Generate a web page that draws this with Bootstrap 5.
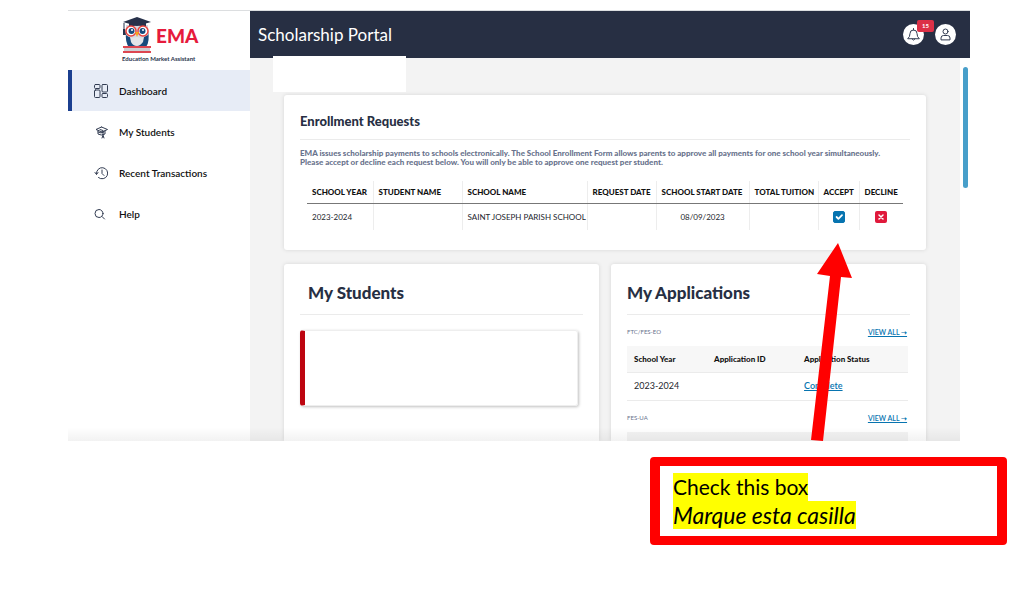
<!DOCTYPE html>
<html lang="en">
<head>
<meta charset="utf-8">
<meta name="viewport" content="width=device-width, initial-scale=1">
<title>Scholarship Portal</title>
<link href="https://cdn.jsdelivr.net/npm/bootstrap@5.3.0/dist/css/bootstrap.min.css" rel="stylesheet">
<style>
  body { font-family: Lato, "Open Sans", sans-serif; color: #111; background: #fff; font-size: 8px; line-height: 10px; }
  .portal { margin: 10px 48px 0 68px; border-top: 1px solid #dcdee0; overflow: hidden; }
  .side { width: 182px; flex: none; background: #fff; }
  .brand { height: 59px; padding: 6px 0 0 54px; }
  .brand-owl { width: 30px; height: 37px; }
  .brand-name { font: 900 19px/32px Lato, sans-serif; color: #e61b3c; }
  .brand-tag { font: 700 6px/9px Lato, sans-serif; color: #27314a; }
  .side .nav-link { height: 41px; padding: 0 0 0 22px; border-left: 4px solid transparent; color: #111; font-size: 10px; font-weight: 600; border-radius: 0; gap: 11px; }
  .side .nav-link.active { background: #e7ecf6; border-color: #1b3f8f; }
  .side .nav-link svg { width: 14px; height: 14px; color: #323c52; }
  .line { fill: none; stroke: currentColor; stroke-linecap: round; stroke-linejoin: round; }
  .topbar { height: 47px; background: #272f43; color: #fff; padding: 0 14px 0 8px; gap: 11px; }
  .topbar h1 { font-size: 17px; line-height: 20px; font-weight: 400; }
  .round-btn { width: 21px; height: 21px; background: #fff; border: 0; border-radius: 50%; color: #323c52; }
  .round-btn svg { width: 15px; height: 15px; }
  .count { font-size: 6px; line-height: 6px; padding: 3px 5px; background: #dc3046; border-radius: 2px; left: 14px; top: -4px; }
  .content { background: #f3f3f3; padding: 0 34px; min-width: 0; }
  .blank { width: 133px; height: 36px; margin: -2px 0 3px -11px; background: #fff; }
  .gutter { width: 10px; flex: none; padding: 9px 2px 0 3px; }
  .thumb { height: 121px; background: #489fca; border-radius: 3px; }
  .panel { background: #fff; border-radius: 3px; box-shadow: 0 0 4px rgba(0,0,0,.12); padding: 0 16px; color: #272f43; }
  .panel h2 { font-size: 13px; line-height: 16px; font-weight: 900; padding: 18px 0 10px; margin: 0; border-bottom: 1px solid #ebebeb; }
  .panel h2.big { font-size: 17px; line-height: 20px; padding: 19px 0 11px; }
  .lower { gap: 12px; margin-top: 14px; }
  .lower .panel { border-radius: 3px 3px 0 0; }
  .intro { font-weight: 900; line-height: 9px; color: #68728c; margin: 9px 0 14px; }
  .panel table { margin: 0; color: #24272e; table-layout: fixed; }
  .requests { padding: 0 7px 20px; }
  .requests th, .requests td { padding: 0 5px; white-space: nowrap; border-right: 1px solid #ededed; border-bottom: 0; text-align: left; vertical-align: middle; box-shadow: none; }
  .requests th:last-child, .requests td:last-child { border-right: 0; }
  .requests th { height: 22px; font-weight: 900; border-bottom: 1px solid #777; color: #111; }
  .requests td { height: 27px; }
  .w-year { width: 66px; } .w-student { width: 89px; } .w-date { width: 69px; } .w-start { width: 93px; }
  .w-total { width: 69px; } .w-accept { width: 41px; } .w-decline { width: 44px; }
  .tick.form-check-input { width: 12px; height: 12px; margin: 0; border-radius: 2px; display: block; }
  .tick.form-check-input:checked { background-color: #0774b0; border-color: #0774b0; background-size: 12px; }
  .cross { width: 12px; height: 12px; border: 0; border-radius: 2px; background: #e0193b; color: #fff; }
  .cross svg { width: 8px; height: 8px; stroke-width: 1.5; }
  .student { height: 76px; margin: 15px 5px 0 0; border: 1px solid #eee; border-left: 5px solid #bd0510; border-radius: 3px; box-shadow: 1px 1px 3px rgba(0,0,0,.25); }
  .group-head { font-size: 6px; line-height: 10px; color: #68728c; padding: 12px 3px 9px 0; }
  .group-head a { font-size: 7px; font-weight: 600; color: #0774b0; }
  .apps { padding-right: 2px; }
  .apps th { background: #f7f7f7; height: 26px; font-weight: 900; color: #111; }
  .apps td { height: 28px; font-size: 9px; }
  .apps th, .apps td { padding: 0 7px; border-bottom: 1px solid #ebebeb; box-shadow: none; vertical-align: middle; text-align: left; }
  .apps td a { color: #0774b0; font-weight: 600; }
  .w-app { width: 80px; } .w-id { width: 90px; }
  .next-table { height: 9px; background: #f3f3f3; margin-right: 2px; }
  .fade-foot { left: 0; right: 10px; bottom: 0; height: 14px; background: linear-gradient(transparent, rgba(0,0,0,.05)); pointer-events: none; }
  .callout { width: 357px; margin: 16px 11px 0 auto; border: 9px solid #f00; border-left-width: 10px; border-right-width: 10px; border-radius: 4px; background: #fff; color: #000; padding: 7px 13px; line-height: 28px; }
  .callout p { margin: 0; font-size: 21px; }
  .callout p.es { font-size: 23px; }
  .callout mark { background: #ff0; padding: 0; display: inline-block; color: #000; }
  .pointer { width: 42px; height: 200px; right: 144px; bottom: 93px; pointer-events: none; }
</style>
</head>
<body>
<div class="portal d-flex position-relative">
  <aside class="side">
    <div class="brand">
      <div class="d-flex align-items-center gap-1">
        <svg class="brand-owl" viewBox="0 0 30 37" aria-hidden="true">
          <path d="M4 14Q3 26 7 30H24Q28 25 26 13L15 9Z" fill="#174a7c"/>
          <path d="M8 20Q15 15 22 20L21 25Q18 29 15 29Q11 29 9 25Z" fill="#e2e4e8"/>
          <path d="M4 8H26V18Q20 22 15 20Q8 22 4 18Z" fill="#d4d9e1"/>
          <path d="M7 6H24V10Q15 7 7 10Z" fill="#27314a"/>
          <path d="M15 0L29 5L15 9L1 5Z" fill="#27314a"/>
          <path d="M2 6V12" stroke="#27314a"/><path d="M1 12H3L4 18H1Z" fill="#27314a"/>
          <g fill="#fff" stroke="#e9433f" stroke-width="1.5"><circle cx="9" cy="14" r="5"/><circle cx="21" cy="14" r="5"/></g>
          <g fill="#174a7c"><circle cx="9.500" cy="14" r="3"/><circle cx="20.500" cy="14" r="3"/></g>
          <g fill="#fff"><circle cx="10" cy="13" r="1"/><circle cx="21" cy="13" r="1"/></g>
          <path d="M13 15H17L15 20Z" fill="#f4a51c"/>
          <path d="M1 29H29V31H1Z" fill="#dd4650"/><path d="M2 31H28V34H2Z" fill="#cdd0d4"/><path d="M1 34H29V36H1Z" fill="#dd4650"/>
        </svg>
        <span class="brand-name">EMA</span>
      </div>
      <div class="brand-tag">Education Market Assistant</div>
    </div>
    <nav class="nav flex-column flex-nowrap">
      <a class="nav-link active d-flex align-items-center" href="#"><svg class="line" viewBox="0 0 14 14"><rect x=".5" y=".5" width="5.500" height="4" rx="1"/><rect x=".5" y="6" width="5.500" height="7.500" rx="1"/><rect x="8" y=".5" width="5.500" height="7.500" rx="1"/><rect x="8" y="9.500" width="5.500" height="4" rx="1"/></svg>Dashboard</a>
      <a class="nav-link d-flex align-items-center" href="#"><svg class="line" viewBox="0 0 14 14"><path d="M7.500 2L13.500 4.500L8 7M7.500 2L2 4.500L8 7M4 6V9Q7 11 11 9V6M6 4.500L9 5.500V12M8 13L9 10.500L10 13M4 7Q7 9 10 7"/></svg>My Students</a>
      <a class="nav-link d-flex align-items-center" href="#"><svg class="line" viewBox="0 0 14 14"><path d="M2.500 8A5.600 5.600 0 1 1 4.500 11.600M1 6.500L2.500 8.500L4 6.500M8 4V7.500L10 9.500"/></svg>Recent Transactions</a>
      <a class="nav-link d-flex align-items-center" href="#"><svg class="line" viewBox="0 0 14 14"><circle cx="5" cy="6.500" r="4"/><path d="M8 9.500L10.500 12"/></svg>Help</a>
    </nav>
  </aside>
  <div class="flex-grow-1">
    <header class="topbar d-flex align-items-center">
      <h1 class="m-0 me-auto">Scholarship Portal</h1>
      <button class="round-btn position-relative p-0 d-flex align-items-center justify-content-center" type="button" aria-label="Notifications"><svg class="line" viewBox="0 0 15 15"><path d="M2 11.500Q4 10 4 6.500Q4 3 7.500 3Q11 3 11 6.500Q11 10 13 11.500ZM6 12Q7.500 14.500 9 12M7.500 1.500V3"/></svg><span class="badge count position-absolute">15</span></button>
      <button class="round-btn p-0 d-flex align-items-center justify-content-center" type="button" aria-label="Account"><svg class="line" viewBox="0 0 15 15"><circle cx="7.500" cy="4.500" r="2.500"/><path d="M3 12.500V11Q3 8.500 5.500 8.500H9.500Q12 8.500 12 11V12.500Z"/></svg></button>
    </header>
    <div class="d-flex">
      <main class="content flex-grow-1">
        <div class="blank position-relative"></div>
        <section class="panel">
          <h2>Enrollment Requests</h2>
          <p class="intro">EMA issues scholarship payments to schools electronically. The School Enrollment Form allows parents to approve all payments for one school year simultaneously.<br>Please accept or decline each request below. You will only be able to approve one request per student.</p>
          <div class="requests">
            <table class="table">
              <thead><tr><th class="w-year">SCHOOL YEAR</th><th class="w-student">STUDENT NAME</th><th>SCHOOL NAME</th><th class="w-date">REQUEST DATE</th><th class="w-start">SCHOOL START DATE</th><th class="w-total">TOTAL TUITION</th><th class="w-accept">ACCEPT</th><th class="w-decline">DECLINE</th></tr></thead>
              <tbody><tr><td>2023-2024</td><td></td><td>SAINT JOSEPH PARISH SCHOOL</td><td></td><td class="text-center">08/09/2023</td><td></td>
                <td><input class="form-check-input tick mx-auto" type="checkbox" checked aria-label="Accept"></td>
                <td><button class="cross p-0 d-flex align-items-center justify-content-center mx-auto" type="button" aria-label="Decline"><svg class="line" viewBox="0 0 8 8"><path d="M2 2L6 6M6 2L2 6"/></svg></button></td></tr></tbody>
            </table>
          </div>
        </section>
        <div class="d-flex lower">
          <section class="panel col">
            <h2 class="big ps-2">My Students</h2>
            <div class="student"></div>
          </section>
          <section class="panel col">
            <h2 class="big">My Applications</h2>
            <div class="group-head d-flex justify-content-between"><span>FTC/FES-EO</span><a href="#">VIEW ALL ➝</a></div>
            <div class="apps">
              <table class="table">
                <thead><tr><th class="w-app">School Year</th><th class="w-id">Application ID</th><th>Application Status</th></tr></thead>
                <tbody><tr><td>2023-2024</td><td></td><td><a href="#">Complete</a></td></tr></tbody>
              </table>
            </div>
            <div class="group-head d-flex justify-content-between"><span>FES-UA</span><a href="#">VIEW ALL ➝</a></div>
            <div class="next-table"></div>
          </section>
        </div>
      </main>
      <div class="gutter"><div class="thumb"></div></div>
    </div>
  </div>
  <div class="fade-foot position-absolute"></div>
</div>
<div class="callout position-relative">
  <svg class="pointer position-absolute" viewBox="0 0 42 200" aria-hidden="true"><path d="M27 0L41 35L30 34L12 198L0 197L19 33L6 31Z" fill="#f00"/></svg>
  <p><mark>Check this box</mark></p>
  <p class="es fst-italic"><mark>Marque esta casilla</mark></p>
</div>
<script src="https://cdn.jsdelivr.net/npm/bootstrap@5.3.0/dist/js/bootstrap.bundle.min.js"></script>
</body>
</html>
